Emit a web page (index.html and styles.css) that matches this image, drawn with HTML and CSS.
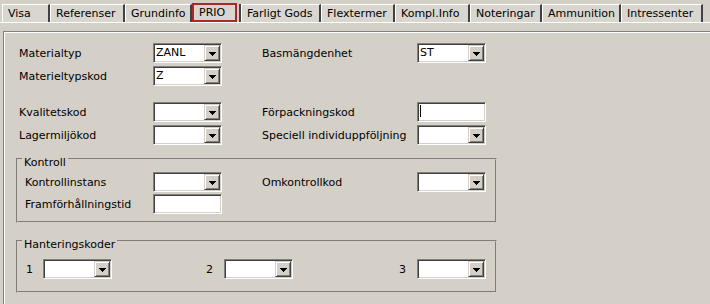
FILE: index.html
```html
<!DOCTYPE html>
<html lang="sv">
<head>
<meta charset="utf-8">
<title>PRIO</title>
<link rel="stylesheet" href="styles.css">
</head>
<body>
<div class="tabs">
  <div class="tab">Visa</div>
  <div class="tab">Referenser</div>
  <div class="tab">Grundinfo</div>
  <div class="tab sel"><span class="selbox">PRIO</span></div>
  <div class="tab">Farligt Gods</div>
  <div class="tab">Flextermer</div>
  <div class="tab">Kompl.Info</div>
  <div class="tab">Noteringar</div>
  <div class="tab">Ammunition</div>
  <div class="tab">Intressenter</div>
</div>

<div class="panel">
  <div class="rows">
    <div class="row">
      <span class="lbl">Materialtyp</span>
      <div class="combo"><span class="val">ZANL</span><span class="btn"><svg width="7" height="4" viewBox="0 0 7 4" shape-rendering="crispEdges"><rect x="0" y="0" width="7" height="1"/><rect x="1" y="1" width="5" height="1"/><rect x="2" y="2" width="3" height="1"/><rect x="3" y="3" width="1" height="1"/></svg></span></div>
      <span class="lbl rl">Basmängdenhet</span>
      <div class="combo"><span class="val">ST</span><span class="btn"><svg width="7" height="4" viewBox="0 0 7 4" shape-rendering="crispEdges"><rect x="0" y="0" width="7" height="1"/><rect x="1" y="1" width="5" height="1"/><rect x="2" y="2" width="3" height="1"/><rect x="3" y="3" width="1" height="1"/></svg></span></div>
    </div>
    <div class="row">
      <span class="lbl">Materieltypskod</span>
      <div class="combo"><span class="val">Z</span><span class="btn"><svg width="7" height="4" viewBox="0 0 7 4" shape-rendering="crispEdges"><rect x="0" y="0" width="7" height="1"/><rect x="1" y="1" width="5" height="1"/><rect x="2" y="2" width="3" height="1"/><rect x="3" y="3" width="1" height="1"/></svg></span></div>
    </div>
    <div class="row gap">
      <span class="lbl">Kvalitetskod</span>
      <div class="combo"><span class="val"></span><span class="btn"><svg width="7" height="4" viewBox="0 0 7 4" shape-rendering="crispEdges"><rect x="0" y="0" width="7" height="1"/><rect x="1" y="1" width="5" height="1"/><rect x="2" y="2" width="3" height="1"/><rect x="3" y="3" width="1" height="1"/></svg></span></div>
      <span class="lbl rl">Förpackningskod</span>
      <div class="field"><span class="caret"></span></div>
    </div>
    <div class="row">
      <span class="lbl">Lagermiljökod</span>
      <div class="combo"><span class="val"></span><span class="btn"><svg width="7" height="4" viewBox="0 0 7 4" shape-rendering="crispEdges"><rect x="0" y="0" width="7" height="1"/><rect x="1" y="1" width="5" height="1"/><rect x="2" y="2" width="3" height="1"/><rect x="3" y="3" width="1" height="1"/></svg></span></div>
      <span class="lbl rl">Speciell individuppföljning</span>
      <div class="combo"><span class="val"></span><span class="btn"><svg width="7" height="4" viewBox="0 0 7 4" shape-rendering="crispEdges"><rect x="0" y="0" width="7" height="1"/><rect x="1" y="1" width="5" height="1"/><rect x="2" y="2" width="3" height="1"/><rect x="3" y="3" width="1" height="1"/></svg></span></div>
    </div>
  </div>

  <fieldset class="group kontroll">
    <legend>Kontroll</legend>
    <div class="row krow">
      <span class="lbl">Kontrollinstans</span>
      <div class="combo"><span class="val"></span><span class="btn"><svg width="7" height="4" viewBox="0 0 7 4" shape-rendering="crispEdges"><rect x="0" y="0" width="7" height="1"/><rect x="1" y="1" width="5" height="1"/><rect x="2" y="2" width="3" height="1"/><rect x="3" y="3" width="1" height="1"/></svg></span></div>
      <span class="lbl rl">Omkontrollkod</span>
      <div class="combo"><span class="val"></span><span class="btn"><svg width="7" height="4" viewBox="0 0 7 4" shape-rendering="crispEdges"><rect x="0" y="0" width="7" height="1"/><rect x="1" y="1" width="5" height="1"/><rect x="2" y="2" width="3" height="1"/><rect x="3" y="3" width="1" height="1"/></svg></span></div>
    </div>
    <div class="row krow k2">
      <span class="lbl">Framförhållningstid</span>
      <div class="field"></div>
    </div>
  </fieldset>

  <fieldset class="group hant">
    <legend>Hanteringskoder</legend>
    <div class="hrow">
      <span class="num first">1</span>
      <div class="combo"><span class="val"></span><span class="btn"><svg width="7" height="4" viewBox="0 0 7 4" shape-rendering="crispEdges"><rect x="0" y="0" width="7" height="1"/><rect x="1" y="1" width="5" height="1"/><rect x="2" y="2" width="3" height="1"/><rect x="3" y="3" width="1" height="1"/></svg></span></div>
      <span class="num">2</span>
      <div class="combo"><span class="val"></span><span class="btn"><svg width="7" height="4" viewBox="0 0 7 4" shape-rendering="crispEdges"><rect x="0" y="0" width="7" height="1"/><rect x="1" y="1" width="5" height="1"/><rect x="2" y="2" width="3" height="1"/><rect x="3" y="3" width="1" height="1"/></svg></span></div>
      <span class="num">3</span>
      <div class="combo"><span class="val"></span><span class="btn"><svg width="7" height="4" viewBox="0 0 7 4" shape-rendering="crispEdges"><rect x="0" y="0" width="7" height="1"/><rect x="1" y="1" width="5" height="1"/><rect x="2" y="2" width="3" height="1"/><rect x="3" y="3" width="1" height="1"/></svg></span></div>
    </div>
  </fieldset>
</div>
</body>
</html>
```

FILE: styles.css
```css
html, body {
  margin: 0;
  padding: 0;
}
body {
  width: 710px;
  height: 304px;
  overflow: hidden;
  background: #d4d0c8;
  color: #000;
  font-family: "DejaVu Sans", Verdana, sans-serif;
  font-size: 11px;
}

/* ---------- tab strip ---------- */
.tabs {
  display: grid;
  grid-template-columns: 48px 75px 67px 49px 80px 74px 75px 72px 79px 82px;
  padding: 4px 0 0 2px;
  height: 18px;
  border-bottom: 1px solid #ffffff;
}
.tab {
  box-sizing: border-box;
  height: 18px;
  border-top: 1px solid #ffffff;
  border-left: 1px solid #ffffff;
  border-right: 2px solid #404040;
  background: #d9d6cf;
  padding-left: 5px;
  line-height: 17px;
  white-space: nowrap;
}
.tab.sel {
  border-top: 0;
  border-left: 0;
  background: transparent;
  padding-left: 0;
}
.selbox {
  display: block;
  box-sizing: border-box;
  width: 45px;
  height: 19px;
  margin-top: -1px;
  border: 2px solid #a8282c;
  background: #d9d6cf;
  padding-left: 5px;
  line-height: 15px;
}

/* ---------- page panel ---------- */
.panel {
  box-sizing: border-box;
  margin: 8px 0 0 3px;
  width: 707px;
  height: 273px;
  border-top: 1px solid #808080;
  border-left: 1px solid #808080;
  box-shadow: inset 1px 1px 0 #ffffff;
  padding: 11px 0 0 12px;
}
.rows {
  padding-left: 3px;
}
.row {
  display: grid;
  grid-template-columns: 134px 69px 40px 155px 69px;
  height: 20px;
  align-items: center;
}
.row + .row {
  margin-top: 3px;
}
.row.gap {
  margin-top: 16px;
}
.lbl {
  white-space: nowrap;
}
.rl {
  grid-column: 4;
}

/* ---------- group boxes ---------- */
.group {
  box-sizing: border-box;
  width: 481px;
  min-width: 0;
  margin: 0;
  border: 2px groove #d4d0c8;
  padding: 3px 7px 7px 7px;
}
.group legend {
  margin-left: -3px;
  padding: 7px 2px 0;
  line-height: 13px;
}
.kontroll {
  margin-top: 4px;
}
.krow {
  grid-template-columns: 128px 69px 40px 155px 69px;
}
.row.k2 {
  margin-top: 2px;
}
.hant {
  margin-top: 8px;
  padding-top: 8px;
  padding-bottom: 12px;
}
.hrow {
  display: grid;
  grid-template-columns: 18px 69px 112px 69px 124px 69px;
  height: 20px;
  align-items: center;
}
.num {
  text-align: right;
  padding-right: 11px;
}
.num.first {
  text-align: left;
  padding: 0 0 0 1px;
}

/* ---------- combo boxes & edits ---------- */
.combo, .field {
  box-sizing: border-box;
  width: 69px;
  height: 20px;
  background: #ffffff;
  border: 1px solid;
  border-color: #808080 #ffffff #ffffff #808080;
  box-shadow: inset 1px 1px 0 #404040, inset -1px -1px 0 #d4d0c8;
  display: flex;
  padding: 1px;
}
.val {
  flex: 1;
  padding-left: 1px;
  line-height: 16px;
  white-space: nowrap;
  overflow: hidden;
}
.btn {
  box-sizing: border-box;
  width: 16px;
  height: 16px;
  background: #d4d0c8;
  border: 1px solid;
  border-color: #d4d0c8 #404040 #404040 #d4d0c8;
  box-shadow: inset 1px 1px 0 #ffffff, inset -1px -1px 0 #808080;
  display: flex;
  align-items: center;
  justify-content: center;
}
.btn svg {
  display: block;
  fill: #000000;
  margin-top: 1px;
}
.caret {
  display: block;
  width: 1px;
  height: 12px;
  margin: 1px 0 0 1px;
  background: #000000;
}
```
